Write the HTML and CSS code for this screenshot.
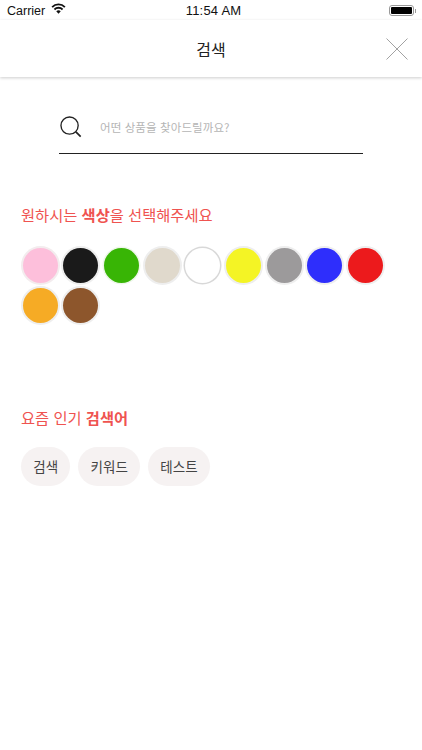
FILE: index.html
```html
<!DOCTYPE html>
<html lang="ko">
<head>
<meta charset="utf-8">
<title>검색</title>
<link rel="stylesheet" href="styles.css">
</head>
<body>
<div class="status">
  <div class="status-left">
    <span>Carrier</span>
    <svg class="wifi" viewBox="0 0 16 12" width="15" height="11.25"><path d="M8 11.5 5.6 8.9a3.4 3.4 0 0 1 4.8 0zM4.3 7.6 3 6.2a7 7 0 0 1 10 0l-1.3 1.4a5.2 5.2 0 0 0-7.4 0zM1.9 5 .5 3.6a10.6 10.6 0 0 1 15 0L14.1 5a8.7 8.7 0 0 0-12.2 0z" fill="#111"/></svg>
  </div>
  <div class="status-time">11:54 AM</div>
  <div class="status-right">
    <div class="battery"><div class="battery-fill"></div></div>
    <div class="battery-tip"></div>
  </div>
</div>
<header class="nav">
  <div class="nav-title">검색</div>
  <svg class="close" viewBox="0 0 22 22" width="22" height="22"><path d="M.5.5l21 21M21.5.5l-21 21" stroke="#8a8a8a" stroke-width=".8" fill="none"/></svg>
</header>
<main class="content">
  <div class="search">
    <svg class="search-icon" viewBox="0 0 23 23" width="22" height="22"><circle cx="10" cy="10" r="9" fill="none" stroke="#222" stroke-width="1.4"/><path d="M16.6 16.6l5 5" stroke="#222" stroke-width="1.8" fill="none"/></svg>
    <span class="placeholder">어떤 상품을 찾아드릴까요?</span>
  </div>
  <h2 class="heading first">원하시는 <b>색상</b>을 선택해주세요</h2>
  <div class="swatches">
    <span class="swatch pink"></span>
    <span class="swatch black"></span>
    <span class="swatch green"></span>
    <span class="swatch beige"></span>
    <span class="swatch white"></span>
    <span class="swatch yellow"></span>
    <span class="swatch gray"></span>
    <span class="swatch blue"></span>
    <span class="swatch red"></span>
    <span class="swatch orange"></span>
    <span class="swatch brown"></span>
  </div>
  <h2 class="heading second">요즘 인기 <b>검색어</b></h2>
  <div class="tags">
    <span class="tag">검색</span>
    <span class="tag">키워드</span>
    <span class="tag">테스트</span>
  </div>
</main>
</body>
</html>
```
FILE: styles.css
```css
* { box-sizing: border-box; }
html, body { margin: 0; padding: 0; }
body {
  width: 422px;
  height: 750px;
  overflow: hidden;
  background: #fff;
  font-family: "Noto Sans CJK KR", "Liberation Sans", sans-serif;
  color: #222;
}
.status {
  height: 20px;
  padding: 1px 6px 0 7px;
  display: grid;
  grid-template-columns: 1fr auto 1fr;
  align-items: center;
  font-family: "Liberation Sans", sans-serif;
  font-size: 12.5px;
  color: #111;
}
.status-left { display: flex; align-items: center; gap: 6px; }
.wifi { margin-top: -3px; }
.status-time { font-weight: 500; font-size: 13px; letter-spacing: .2px; padding-left: 4px; }
.status-right { display: flex; justify-content: flex-end; align-items: center; }
.battery {
  width: 25px;
  height: 11px;
  border: 1px solid #999;
  border-radius: 3px;
  padding: 1px;
}
.battery-fill { height: 100%; background: #000; border-radius: 1px; }
.battery-tip { width: 1px; height: 4px; background: #999; margin-left: 1px; }
.nav {
  height: 57px;
  display: flex;
  align-items: center;
  justify-content: center;
  position: relative;
  box-shadow: 0 1px 3px rgba(0, 0, 0, .2);
  background: #fff;
}
.nav-title { font-size: 16px; color: #222; }
.close { position: absolute; right: 14px; top: 18px; }
.content { padding: 0 21px; }
.search {
  margin: 27px 38px 0;
  height: 50px;
  display: flex;
  align-items: flex-start;
  padding: 12px 0 0 1px;
  border-bottom: 1.5px solid #222;
  width: 304px;
}
.search-icon { flex: none; }
.placeholder { margin-left: 18px; font-size: 11.5px; line-height: 22px; color: #b5b5b5; letter-spacing: .1px; }
.heading { margin: 0; font-size: 15.3px; line-height: 24px; font-weight: 400; color: #ef5350; }
.heading b { font-weight: 700; }
.heading.first { margin-top: 48px; }
.heading.second { margin-top: 82px; }
.swatches {
  margin-top: 21.5px;
  padding-left: 1.5px;
  display: flex;
  flex-wrap: wrap;
  gap: 5.7px;
  width: 380px;
}
.swatch {
  width: 35px;
  height: 35px;
  border-radius: 50%;
  box-shadow: 0 0 0 2px #eee;
}
.pink { background: #fdbfdb; box-shadow: 0 0 0 2px #f3ecee; }
.black { background: #1a1a1a; }
.green { background: #38b505; box-shadow: 0 0 0 1.5px #eef6ea; }
.beige { background: #e0d9cc; }
.white { background: #fff; box-shadow: 0 0 0 1.5px #d8d8d8; }
.yellow { background: #f4f425; }
.gray { background: #9c9a9b; }
.blue { background: #2e2efc; }
.red { background: #ec1a1c; }
.orange { background: #f6ab25; }
.brown { background: #8d562c; }
.tags { margin-top: 18px; display: flex; gap: 8px; }
.tag {
  height: 39px;
  padding: 0 12.25px;
  border-radius: 20px;
  background: #f6f2f2;
  font-size: 13.5px;
  line-height: 39px;
  color: #444;
}
```
